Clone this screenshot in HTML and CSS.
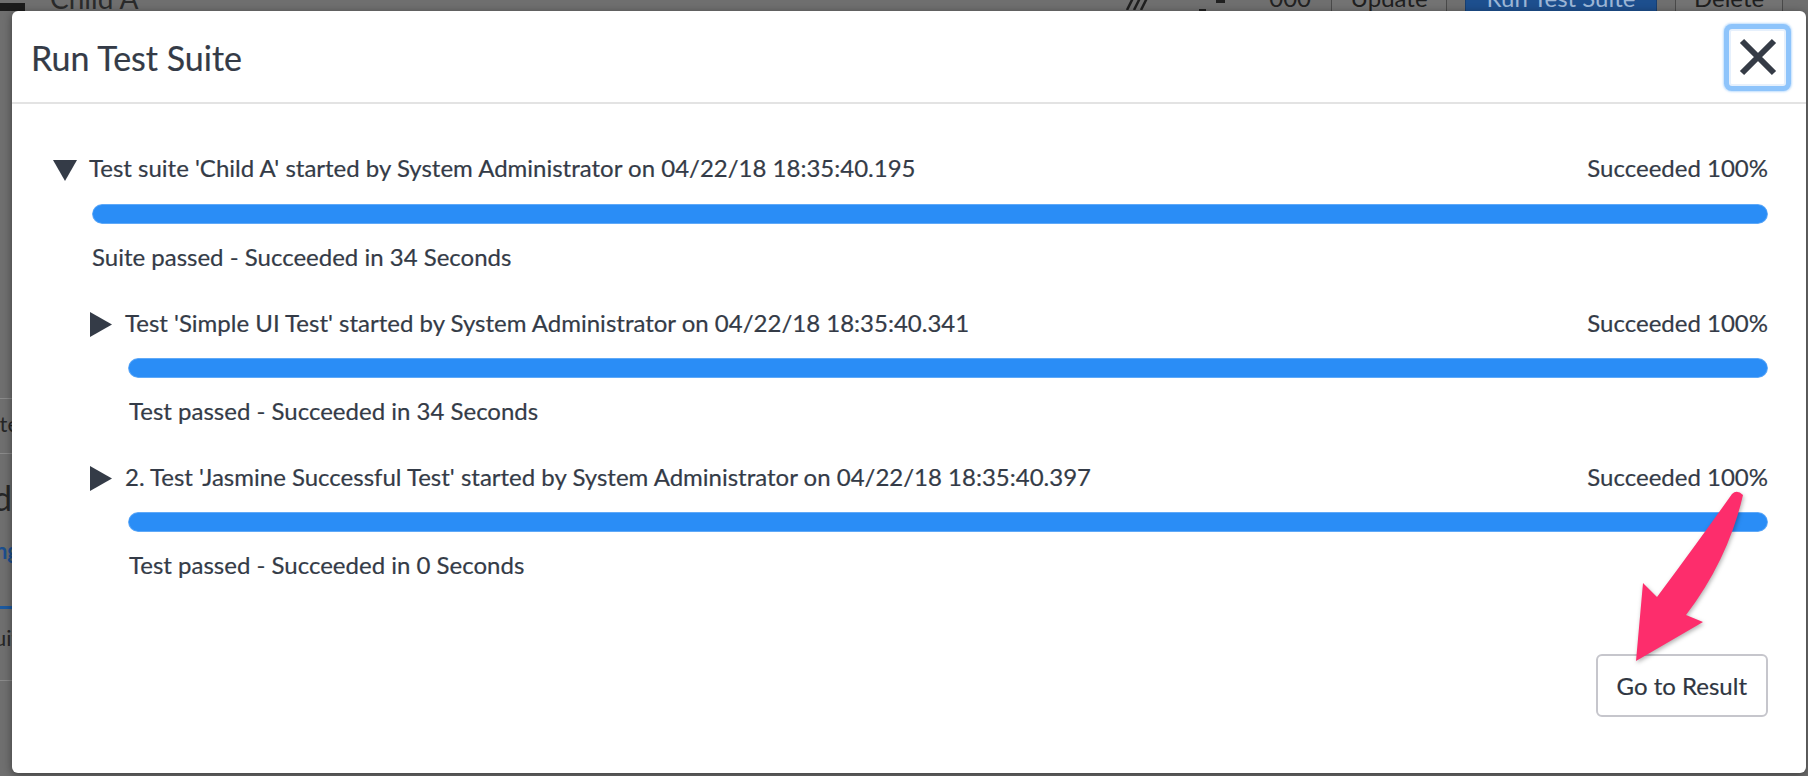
FILE: index.html
```html
<!DOCTYPE html>
<html lang="en">
<head>
<meta charset="utf-8">
<title>Run Test Suite</title>
<link rel="stylesheet" href="styles.css">
</head>
<body>
<div class="page">
  <header class="page-header">
    <div class="nav-icon"></div>
    <div class="record-title">Child A</div>
    <div class="header-tools">
      <svg class="tool-hatch" width="29" height="14" viewBox="0 0 29 14"><path d="M3 14 L10 0 M10 14 L17 0 M17 14 L24 0" stroke="#202020" stroke-width="2.5" fill="none"/></svg>
      <span class="tool-mini"><i class="mini-dash"></i><i class="mini-dot"></i></span>
      <span class="tool-count">000</span>
      <span class="hdr-btn btn-update">Update</span>
      <span class="hdr-btn btn-primary">Run Test Suite</span>
      <span class="hdr-btn btn-delete">Delete</span>
    </div>
  </header>
  <div class="page-body">
    <aside class="peek">
      <div class="peek-rule rule-1"></div>
      <div class="peek-row peek-text text-1"><span class="tail-short">Execute</span></div>
      <div class="peek-rule rule-2"></div>
      <div class="peek-row peek-big"><span>Child</span></div>
      <div class="peek-row peek-link"><span class="tail-short">Testing</span></div>
      <div class="peek-tab"></div>
      <div class="peek-row peek-text text-2"><span class="tail-hidden">Suite</span></div>
      <div class="peek-rule rule-3"></div>
    </aside>
  </div>
</div>

<div class="modal" role="dialog" aria-labelledby="modal-title">
  <div class="modal-header">
    <h1 class="modal-title" id="modal-title">Run Test Suite</h1>
    <button class="close-btn" aria-label="Close">
      <svg width="38" height="38" viewBox="0 0 38 38"><path d="M3 3 L35 35 M35 3 L3 35" stroke="#353b46" stroke-width="6" fill="none"/></svg>
    </button>
  </div>
  <div class="modal-body">
    <div class="run suite">
      <div class="run-head">
        <svg class="caret caret-down" width="24" height="21" viewBox="0 0 24 21"><polygon points="0,0 24,0 12,21"/></svg>
        <span class="run-name">Test suite 'Child A' started by System Administrator on 04/22/18 18:35:40.195</span>
        <span class="run-pct">Succeeded 100%</span>
      </div>
      <div class="run-bar"><div class="run-bar-fill" style="width:100%"></div></div>
      <div class="run-status">Suite passed - Succeeded in 34 Seconds</div>

      <div class="run-children">
        <div class="run test">
          <div class="run-head">
            <svg class="caret caret-right" width="22" height="25" viewBox="0 0 22 25"><polygon points="0,0 22,12.5 0,25"/></svg>
            <span class="run-name">Test 'Simple UI Test' started by System Administrator on 04/22/18 18:35:40.341</span>
            <span class="run-pct">Succeeded 100%</span>
          </div>
          <div class="run-bar"><div class="run-bar-fill" style="width:100%"></div></div>
          <div class="run-status">Test passed - Succeeded in 34 Seconds</div>
        </div>
        <div class="run test">
          <div class="run-head">
            <svg class="caret caret-right" width="22" height="25" viewBox="0 0 22 25"><polygon points="0,0 22,12.5 0,25"/></svg>
            <span class="run-name">2. Test 'Jasmine Successful Test' started by System Administrator on 04/22/18 18:35:40.397</span>
            <span class="run-pct">Succeeded 100%</span>
          </div>
          <div class="run-bar"><div class="run-bar-fill" style="width:100%"></div></div>
          <div class="run-status">Test passed - Succeeded in 0 Seconds</div>
        </div>
      </div>
    </div>
    <div class="modal-footer">
      <button class="btn-result">Go to Result</button>
    </div>
  </div>
</div>

<svg class="callout-arrow" width="160" height="200" viewBox="0 0 160 200" aria-hidden="true">
  <path d="M132 14 Q137 9 143 15 Q128 80 86 135 L103 142 L36 181 L43 103 L57 117 Q98 62 132 14 Z" fill="#fd2d6c"/>
</svg>
</body>
</html>
```

FILE: styles.css
```css
* { box-sizing: border-box; }

html, body {
  margin: 0;
  padding: 0;
}

body {
  position: relative;
  width: 1808px;
  height: 776px;
  overflow: hidden;
  background: #6f6f6f;
  font-family: Lato, "Liberation Sans", sans-serif;
}

/* ---------- dimmed page behind the dialog ---------- */
.page-header {
  display: flex;
  align-items: flex-start;
  height: 44px;
  margin-top: -24px;
}

.nav-icon {
  width: 25px;
  height: 8px;
  margin-top: 27px;
  background: #1c1c1c;
}

.record-title {
  margin-left: 25px;
  font-size: 28px;
  line-height: 44px;
  color: #2a2a2a;
}

.header-tools {
  display: flex;
  align-items: stretch;
  height: 44px;
  margin-left: auto;
  padding-right: 25px;
}

.tool-hatch {
  align-self: flex-end;
  margin-bottom: 10px;
}

.tool-mini {
  display: flex;
  align-items: flex-end;
  width: 32px;
  margin-left: 46px;
  padding-bottom: 9px;
}

.mini-dash {
  width: 7px;
  height: 2px;
  background: #202020;
}

.mini-dot {
  width: 9px;
  height: 6px;
  margin-left: 10px;
  margin-bottom: 8px;
  background: #202020;
}

.tool-count {
  margin-left: 38px;
  font-size: 24px;
  line-height: 44px;
  color: #222;
}

.hdr-btn {
  font-size: 24px;
  line-height: 42px;
  color: #1f1f1f;
  border: 1px solid #4a4a4a;
  background: #737373;
  text-align: center;
}

.btn-update { width: 116px; margin-left: 20px; }
.btn-primary { width: 192px; margin-left: 18px; background: #1d4f8e; border-color: #173f72; color: #9cb6d6; }
.btn-delete { width: 108px; margin-left: 18px; }

.page-body {
  display: flex;
}

.peek {
  display: flex;
  flex-direction: column;
  width: 12px;
  overflow: hidden;
  color: #262626;
}

.peek-row {
  display: flex;
  justify-content: flex-end;
  white-space: nowrap;
}

.peek-row span { flex-shrink: 0; }

.peek-rule { height: 1px; background: #8a8a8a; width: 12px; }
.rule-1 { margin-top: 378px; }
.rule-2 { margin-top: 17px; }
.rule-3 { margin-top: 30px; }

.peek-text {
  font-size: 22px;
  line-height: 24px;
}
.text-1 { margin-top: 13px; }
.text-2 { margin-top: 17px; }
.tail-hidden { margin-right: -19px; }
.tail-short { margin-right: -7px; }

.peek-big {
  margin-top: 24px;
  font-size: 34px;
  line-height: 40px;
}

.peek-link {
  margin-top: 21px;
  font-size: 22px;
  line-height: 24px;
  color: #1d4f8e;
  font-weight: 700;
}

.peek-tab {
  width: 12px;
  height: 3px;
  margin-top: 43px;
  background: #1d5aa0;
}

/* ---------- dialog ---------- */
.modal {
  position: absolute;
  left: 12px;
  top: 11px;
  width: 1794px;
  height: 762px;
  background: #fff;
  border-radius: 6px;
  box-shadow: 0 2px 8px rgba(0, 0, 0, 0.45);
  color: #343b47;
  -webkit-text-stroke: 0.2px #343b47;
}

.modal-header {
  display: flex;
  align-items: center;
  justify-content: space-between;
  height: 93px;
  padding: 0 20px 0 19px;
  border-bottom: 2px solid #e3e3e3;
}

.modal-title {
  margin: 2px 0 0;
  font-size: 34px;
  font-weight: 400;
  line-height: 41px;
}

.close-btn {
  display: flex;
  align-items: center;
  justify-content: center;
  width: 57px;
  height: 57px;
  padding: 0;
  margin-top: 1px;
  background: #fff;
  border: 2px solid #e6f0fc;
  border-radius: 3px;
  box-shadow: 0 0 0 5px #8ec4fb, 0 0 2px 6px rgba(142, 196, 251, 0.55);
}

.modal-body {
  padding: 49px 38px 0 41px;
}

.run-head {
  display: flex;
  align-items: flex-start;
  font-size: 24px;
  line-height: 30px;
}

.caret { fill: #343b47; flex-shrink: 0; }
.caret-down { margin: 7px 12px 0 0; }
.caret-right { margin: 4px 13px 0 0; }

.run-name {
  flex: 1;
  white-space: nowrap;
}

.run-pct {
  white-space: nowrap;
}

.run-bar {
  height: 20px;
  margin: 21px 0 0 39px;
  border-radius: 10px;
  background: #e6eef8;
  overflow: hidden;
}

.run-bar-fill {
  height: 100%;
  border-radius: 10px;
  background: #2a8df6;
  box-shadow: inset 0 0 0 1px rgba(255, 255, 255, 0.25);
}

.test .run-bar { margin: 20px 0 0 38px; }

.run-status {
  margin: 18px 0 0 39px;
  font-size: 24px;
  line-height: 30px;
}

.run-children {
  margin: 36px 0 0 37px;
}

.run-children .test + .test {
  margin-top: 36px;
}

.modal-footer {
  display: flex;
  justify-content: flex-end;
  margin-top: 74px;
}

.btn-result {
  height: 63px;
  padding: 0 19px;
  font-family: Lato, "Liberation Sans", sans-serif;
  font-size: 24px;
  line-height: 59px;
  color: #2f3642;
  -webkit-text-stroke: 0.2px #2f3642;
  background: #fff;
  border: 2px solid #c6c6cc;
  border-radius: 6px;
}

/* ---------- annotation arrow ---------- */
.callout-arrow {
  position: absolute;
  left: 1600px;
  top: 480px;
  filter: drop-shadow(1px 2px 2px rgba(0, 0, 0, 0.3));
}
```
